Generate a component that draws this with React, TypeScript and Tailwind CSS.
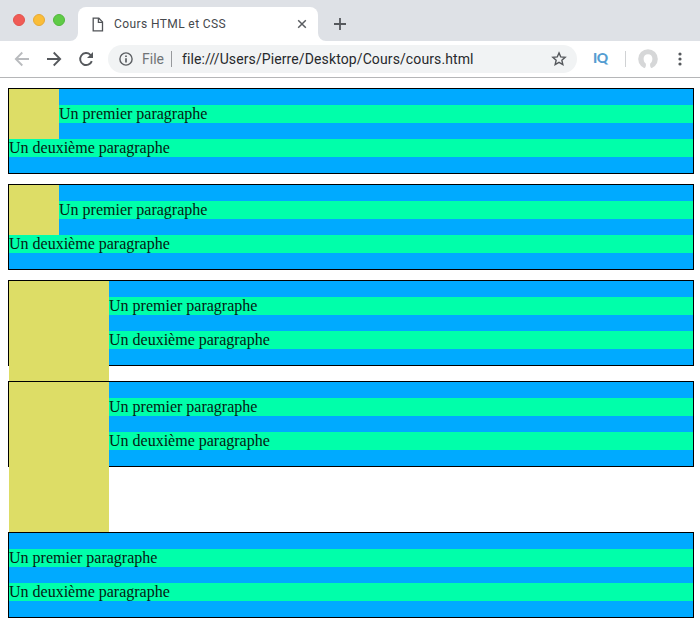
import React from 'react';

const Light = ({ color }: { color: string }) => (
  <span className={`size-3 rounded-full border ${color}`} />
);

function TabStrip() {
  return (
    <div className="flex h-[41px] items-end bg-[#dee1e6]">
      <div className="flex w-[70px] gap-2 self-start pt-[14px] pl-[13px]">
        <Light color="border-[#e2524c] bg-[#f05b56]" />
        <Light color="border-[#e6a935] bg-[#fabd38]" />
        <Light color="border-[#51b73c] bg-[#5fcb46]" />
      </div>
      <svg className="size-2" viewBox="0 0 8 8"><path d="M8 0v8H0a8 8 0 0 0 8-8" fill="#fff" /></svg>
      <div className="flex h-[34px] w-[240px] items-center rounded-t-lg bg-white pr-[11px] pl-[14px]">
        <svg className="mr-2 h-[15px] w-[14px] shrink-0" viewBox="0 0 14 15" fill="none" stroke="#505357" strokeWidth="1.3">
          <path d="M1.2 1.2h5.6l3.7 3.7v8.9H1.2z" />
          <path d="M6.4 1.2v4.1h4.1" />
        </svg>
        <span className="flex-1 whitespace-nowrap text-[12px] tracking-[0.4px] text-[#45484c]">Cours HTML et CSS</span>
        <svg className="size-[10px]" viewBox="0 0 10 10" stroke="#5a5d61" strokeWidth="1.5"><path d="m1.2 1.2 7.6 7.6M8.8 1.2 1.2 8.8" /></svg>
      </div>
      <svg className="size-2" viewBox="0 0 8 8"><path d="M0 0v8h8a8 8 0 0 1-8-8" fill="#fff" /></svg>
      <svg className="mb-[11px] ml-2 size-3" viewBox="0 0 12 12" stroke="#55585c" strokeWidth="1.8"><path d="M6 0v12M0 6h12" /></svg>
    </div>
  );
}

function Toolbar() {
  return (
    <div className="flex h-[37px] items-center border-b border-[#b5b6b8] bg-white pl-[14px]">
      <svg className="size-4" viewBox="0 0 16 16" fill="none" stroke="#b9bbbe" strokeWidth="1.8"><path d="M15 8H2M8.3 1.5 1.8 8l6.5 6.5" /></svg>
      <svg className="ml-4 size-4" viewBox="0 0 16 16" fill="none" stroke="#55585c" strokeWidth="1.8"><path d="M1 8h13M7.7 1.5 14.2 8l-6.5 6.5" /></svg>
      <svg className="ml-4 size-4" viewBox="0 0 16 16" fill="none" stroke="#55585c" strokeWidth="1.9">
        <path d="M13.8 10.1A6 6 0 1 1 12.4 3.8L14 5.4" />
        <path d="M15 1v6H9z" fill="#55585c" stroke="none" />
      </svg>
      <div className="ml-[14px] flex h-7 w-[469px] items-center rounded-full bg-[#f1f3f4] pr-[10px] pl-[11px]">
        <svg className="size-[14px]" viewBox="0 0 14 14" fill="none" stroke="#5c5f63" strokeWidth="1.4">
          <circle cx="7" cy="7" r="6.1" />
          <path d="M7 6.2v4.2M7 3.6v1.5" strokeWidth="1.7" />
        </svg>
        <span className="ml-[9px] w-[29px] whitespace-nowrap text-[14px] text-[#707377]">File</span>
        <span className="h-4 w-px bg-[#97999c]" />
        <span className="ml-[10px] flex-1 whitespace-nowrap text-[14px] tracking-[0.11px] text-[#27292c]">file:///Users/Pierre/Desktop/Cours/cours.html</span>
        <svg className="size-4" viewBox="0 0 16 16" fill="none" stroke="#55585c" strokeWidth="1.4">
          <path d="m8 1.9 1.75 4.05 4.4.4-3.3 2.9.98 4.3L8 11.3l-3.83 2.25.98-4.3-3.3-2.9 4.4-.4z" />
        </svg>
      </div>
      <span className="mb-[2px] ml-4 w-4 font-['Lato'] text-[14px] leading-4 font-black tracking-[-0.4px] text-[#559dd1]">IQ</span>
      <span className="ml-4 h-4 w-px bg-[#d0d2d4]" />
      <svg className="ml-3 size-5" viewBox="0 0 20 20">
        <circle cx="10" cy="10" r="9.8" fill="#d6d7d8" />
        <path d="M10 5.2c-2.8 0-4.4 1.9-4.4 4.6 0 2.3.9 3.9 2.3 4.9v1.5c0 1.7-.7 2.4-2 3.3 2.5 1 5.7 1 8.2 0-1.3-.9-2-1.6-2-3.3v-1.5c1.4-1 2.3-2.6 2.3-4.9 0-2.7-1.6-4.6-4.4-4.6" fill="#fff" />
      </svg>
      <svg className="ml-[20px] h-[14px] w-1" viewBox="0 0 4 14" fill="#55585c"><circle cx="2" cy="2" r="1.6" /><circle cx="2" cy="7" r="1.6" /><circle cx="2" cy="12" r="1.6" /></svg>
    </div>
  );
}

const Para = ({ children }: { children: React.ReactNode }) => (
  <p className="h-[18px] bg-[#00ffaa] leading-[18px]">{children}</p>
);

const box = 'h-[86px] border border-black bg-[#00aaff]';

const ShortFloat = () => (
  <section className={box}>
    <div className="flex">
      <div className="size-[50px] bg-[#dddd66]" />
      <div className="flex-1 pt-4"><Para>Un premier paragraphe</Para></div>
    </div>
    <Para>Un deuxième paragraphe</Para>
  </section>
);

const TallFloat = ({ height }: { height: string }) => (
  <section className={`${box} flex items-start`}>
    <div className={`w-[100px] shrink-0 bg-[#dddd66] ${height}`} />
    <div className="flex flex-1 flex-col gap-4 pt-4">
      <Para>Un premier paragraphe</Para>
      <Para>Un deuxième paragraphe</Para>
    </div>
  </section>
);

export default function App() {
  return (
    <div className="h-[630px] w-[700px] overflow-hidden bg-white font-['Roboto',sans-serif]">
      <TabStrip />
      <Toolbar />
      <main className="mt-[10px] mr-[6px] ml-2 font-['Liberation_Serif',serif] text-[16px] text-[#062012]">
        <ShortFloat />
        <div className="h-[10px]" />
        <ShortFloat />
        <div className="h-[10px]" />
        <TallFloat height="h-[100px]" />
        <div className="h-[15px]" />
        <TallFloat height="h-[150px]" />
        <div className="h-[65px]" />
        <section className={`${box} flex flex-col gap-4 pt-4`}>
          <Para>Un premier paragraphe</Para>
          <Para>Un deuxième paragraphe</Para>
        </section>
      </main>
    </div>
  );
}
